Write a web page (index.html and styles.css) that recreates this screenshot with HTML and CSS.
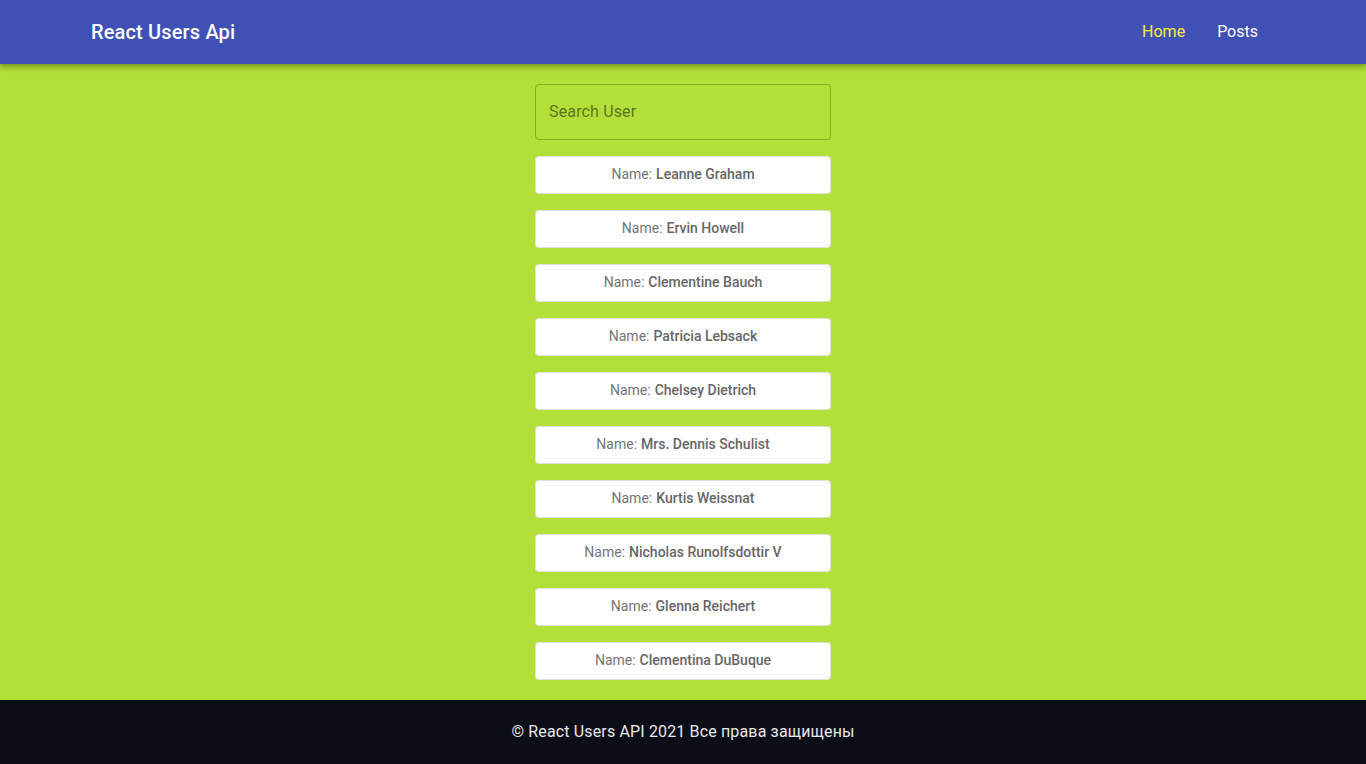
FILE: index.html
```html
<!DOCTYPE html>
<html lang="en">
<head>
<meta charset="utf-8">
<title>React Users Api</title>
<link rel="stylesheet" href="styles.css">
</head>
<body>
<header class="topbar">
  <div class="brand">React Users Api</div>
  <nav class="nav">
    <a class="nav-link active" href="#">Home</a>
    <a class="nav-link" href="#">Posts</a>
  </nav>
</header>
<main class="content">
  <div class="list">
    <input class="search" type="text" placeholder="Search User">
    <div class="card">Name: <b>Leanne Graham</b></div>
    <div class="card">Name: <b>Ervin Howell</b></div>
    <div class="card">Name: <b>Clementine Bauch</b></div>
    <div class="card">Name: <b>Patricia Lebsack</b></div>
    <div class="card">Name: <b>Chelsey Dietrich</b></div>
    <div class="card">Name: <b>Mrs. Dennis Schulist</b></div>
    <div class="card">Name: <b>Kurtis Weissnat</b></div>
    <div class="card">Name: <b>Nicholas Runolfsdottir V</b></div>
    <div class="card">Name: <b>Glenna Reichert</b></div>
    <div class="card">Name: <b>Clementina DuBuque</b></div>
  </div>
</main>
<footer class="footer">© React Users API 2021 Все права защищены</footer>
</body>
</html>
```
FILE: styles.css
```css
* { box-sizing: border-box; }
html, body { margin: 0; padding: 0; }
body {
  font-family: Roboto, "Noto Sans", sans-serif;
  background: #b2df38;
  min-height: 764px;
  display: flex;
  flex-direction: column;
}
.topbar {
  height: 64px;
  background: #3f51b5;
  display: flex;
  align-items: center;
  justify-content: space-between;
  padding: 0 92px 0 91px;
  box-shadow: 0 2px 4px -1px rgba(0,0,0,0.2), 0 4px 5px 0 rgba(0,0,0,0.14), 0 1px 10px 0 rgba(0,0,0,0.12);
  position: relative;
  z-index: 1;
}
.brand {
  color: #fff;
  font-size: 20px;
  font-weight: 500;
  letter-spacing: 0.15px;
}
.nav {
  display: flex;
  padding-bottom: 2px;
}
.nav-link {
  color: #fff;
  text-decoration: none;
  font-size: 16px;
  padding: 0 16px;
}
.nav-link.active { color: #ffeb3b; }
.content {
  flex: 1;
  display: flex;
  justify-content: center;
  padding: 20px 0;
}
.list {
  width: 296px;
  display: flex;
  flex-direction: column;
  gap: 16px;
}
.search {
  height: 56px;
  width: 100%;
  background: transparent;
  border: 1px solid rgba(0,0,0,0.23);
  border-radius: 4px;
  padding: 0 13px 2px;
  font-family: inherit;
  font-size: 16px;
  letter-spacing: 0.15px;
  color: rgba(0,0,0,0.87);
  outline: none;
}
.search::placeholder { color: rgba(0,0,0,0.5); }
.card {
  height: 38px;
  background: #fff;
  border: 1px solid rgba(0,0,0,0.12);
  border-radius: 4px;
  display: flex;
  align-items: center;
  justify-content: center;
  padding-bottom: 2px;
  font-size: 14px;
  color: #757575;
}
.card b {
  font-weight: 500;
  color: #666666;
  margin-left: 4px;
}
.footer {
  height: 64px;
  background: #0b0e17;
  color: #e8e8e8;
  font-size: 16px;
  letter-spacing: 0.15px;
  display: flex;
  align-items: center;
  justify-content: center;
  padding-bottom: 2px;
}
```
